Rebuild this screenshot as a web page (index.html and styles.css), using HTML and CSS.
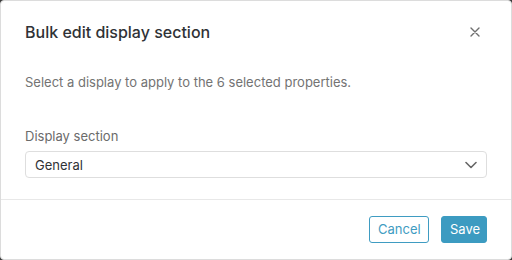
FILE: index.html
```html
<!DOCTYPE html>
<html>
<head>
<meta charset="utf-8">
<link rel="stylesheet" href="styles.css">
</head>
<body>
<div class="modal">
  <div class="header">
    <h1 class="title">Bulk edit display section</h1>
    <button class="close" aria-label="Close">
      <svg width="10" height="10" viewBox="0 0 10 10"><path d="M1 1L9 9M9 1L1 9" stroke="#6f6f6f" stroke-width="1.4" stroke-linecap="round" fill="none"/></svg>
    </button>
  </div>
  <div class="body">
    <p class="desc">Select a display to apply to the 6 selected properties.</p>
    <label class="label">Display section</label>
    <div class="select">
      <span>General</span>
      <svg width="12" height="8" viewBox="0 0 12 8"><path d="M1 1.5L6 6.5L11 1.5" stroke="#666" stroke-width="1.6" fill="none" stroke-linecap="round" stroke-linejoin="round"/></svg>
    </div>
  </div>
  <div class="footer">
    <button class="btn btn-outline">Cancel</button>
    <button class="btn btn-primary">Save</button>
  </div>
</div>
</body>
</html>
```
FILE: styles.css
```css
* { box-sizing: border-box; }
html, body { margin: 0; padding: 0; }
body {
  background: #3a3a3a;
  font-family: Inter, "Noto Sans", "Liberation Sans", sans-serif;
  width: 512px;
  height: 260px;
}
.modal {
  width: 512px;
  height: 260px;
  background: #fff;
  border: 1px solid #dcdcdc;
  border-radius: 4px;
  display: flex;
  flex-direction: column;
}
.header {
  display: flex;
  justify-content: space-between;
  align-items: center;
  padding: 19px 24px 0 24px;
}
.title {
  margin: 0;
  font-size: 16px;
  line-height: 22px;
  font-weight: 500;
  color: #2f3236;
}
.close {
  width: 26px;
  height: 24px;
  border: 0;
  background: transparent;
  padding: 0;
  display: flex;
  align-items: center;
  justify-content: center;
  margin-right: -1px;
}
.body {
  padding: 28px 24px 21px 24px;
  display: flex;
  flex-direction: column;
  border-bottom: 1px solid #e8e8e8;
}
.desc {
  margin: 0;
  font-size: 13px;
  line-height: 20px;
  color: #737373;
}
.label {
  margin-top: 35px;
  font-size: 13px;
  line-height: 18px;
  color: #6b6b6b;
}
.select {
  margin-top: 6px;
  height: 27px;
  border: 1px solid #dedede;
  border-radius: 4px;
  display: flex;
  align-items: center;
  justify-content: space-between;
  padding: 0 9px 0 9px;
  font-size: 13px;
  color: #2f3236;
}
.footer {
  display: flex;
  justify-content: flex-end;
  gap: 12px;
  padding: 16px 24px 0 24px;
}
.btn {
  height: 27px;
  border-radius: 3px;
  font-family: Inter, "Noto Sans", "Liberation Sans", sans-serif;
  font-size: 13px;
  padding: 0 8px;
  line-height: 25px;
}
.btn-outline {
  width: 60px;
  background: #fff;
  border: 1px solid #3f9cc2;
  color: #3f9cc2;
}
.btn-primary {
  width: 46px;
  background: #3c9bc1;
  border: 1px solid #3c9bc1;
  color: #fff;
}
```
